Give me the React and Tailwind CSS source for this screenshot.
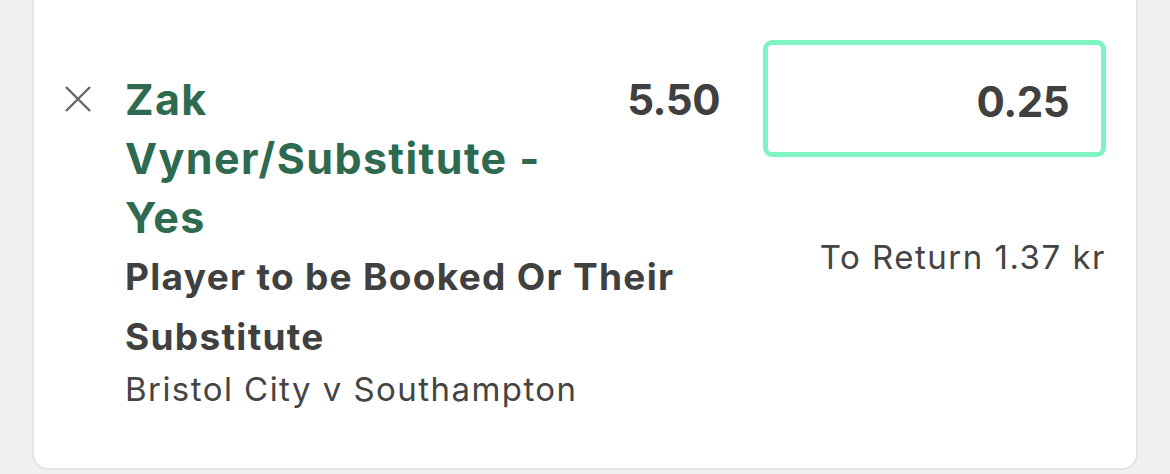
export default function App() {
  return (
    <div className="h-[474px] overflow-hidden bg-[#f0f0f0] px-[32px] pb-[4px] flex flex-col font-['Inter',sans-serif]">
      <div className="flex-1 bg-white rounded-b-[16px] border-2 border-t-0 border-[#e4e4e4] pt-[40px] pl-[30px] pr-[30px] flex">
        {/* remove icon */}
        <svg className="w-[28px] h-[28px] mt-[45px] shrink-0 text-[#666]" viewBox="0 0 28 28" fill="none" stroke="currentColor" strokeWidth={2.4}>
          <path d="M2 2l24 24M26 2L2 26" />
        </svg>

        <div className="flex-1 ml-[33px] flex flex-col">
          <div className="flex items-start mt-[30px]">
            <div className="w-[470px] text-[43px] leading-[59px] font-bold text-[#2d6a4f] tracking-[1.4px]">
              Zak Vyner/Substitute - Yes
            </div>
            <div className="ml-auto text-[42px] leading-[59px] font-bold text-[#404040] tracking-[-0.5px]">5.50</div>
          </div>
          <div className="text-[37px] leading-[60px] font-bold text-[#404040] max-w-[600px] tracking-[1.3px]">
            Player to be Booked Or Their Substitute
          </div>
          <div className="text-[33px] leading-[44px] text-[#444] tracking-[1.45px]">Bristol City v Southampton</div>
        </div>

        <div className="ml-[43px] w-[343px] shrink-0 flex flex-col items-end">
          <div className="w-full h-[117px] border-[5px] border-[#7ef5c0] rounded-[9px] flex items-center justify-end pr-[32px] pt-[6px]">
            <span className="text-[42px] font-bold text-[#404040] tracking-[-0.5px]">0.25</span>
          </div>
          <div className="mt-[78px] text-[33px] leading-[44px] text-[#444] tracking-[1.5px]">To Return 1.37 kr</div>
        </div>
      </div>
    </div>
  )
}
